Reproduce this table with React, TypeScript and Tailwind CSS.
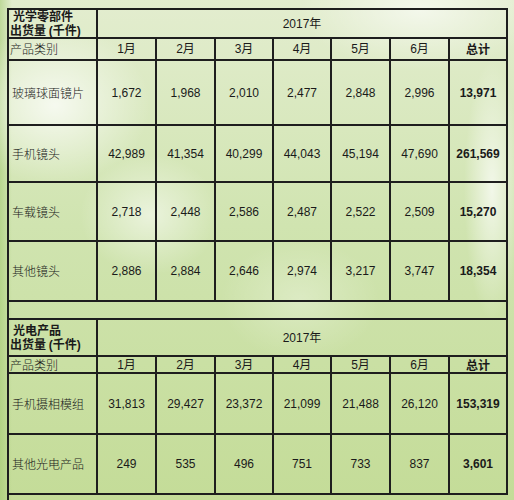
const cjk = "font-['Noto_Sans_CJK_SC',sans-serif]";
const num = "font-['Liberation_Sans','Noto_Sans_CJK_SC',sans-serif]";

const months = ["1月", "2月", "3月", "4月", "5月", "6月"];

type Row = { name: string; values: string[]; total: string; h: string };

const optics: Row[] = [
  { name: "玻璃球面镜片", values: ["1,672", "1,968", "2,010", "2,477", "2,848", "2,996"], total: "13,971", h: "h-[65px]" },
  { name: "手机镜头", values: ["42,989", "41,354", "40,299", "44,043", "45,194", "47,690"], total: "261,569", h: "h-[57px]" },
  { name: "车载镜头", values: ["2,718", "2,448", "2,586", "2,487", "2,522", "2,509"], total: "15,270", h: "h-[59px]" },
  { name: "其他镜头", values: ["2,886", "2,884", "2,646", "2,974", "3,217", "3,747"], total: "18,354", h: "h-[60px]" },
];

const photonics: Row[] = [
  { name: "手机摄相模组", values: ["31,813", "29,427", "23,372", "21,099", "21,488", "26,120"], total: "153,319", h: "h-[61px]" },
  { name: "其他光电产品", values: ["249", "535", "496", "751", "733", "837"], total: "3,601", h: "h-[60px]" },
];

const cell = "border-r-2 border-b-2 border-[#1e1e1e]";

function Section({
  title,
  rows,
  headH,
  subH,
}: {
  title: string;
  rows: Row[];
  headH: string;
  subH: string;
}) {
  return (
    <>
      <div className={`${cell} ${headH} ${cjk} flex flex-col justify-center pl-[1px] text-[12px] font-bold leading-[14px]`}>
        <span className="pl-[3px]">{title}</span>
        <span>
          出货量 <span className={num}>(</span>千件<span className={num}>)</span>
        </span>
      </div>
      <div className={`${cell} ${headH} col-span-7 flex items-center justify-center ${num} text-[12px]`}>
        2017年
      </div>

      <div className={`${cell} ${subH} ${cjk} flex items-center pl-[1px] text-[12px] font-light`}>
        产品类别
      </div>
      {months.map((m) => (
        <div key={m} className={`${cell} ${subH} flex items-center justify-center ${num} text-[12px]`}>
          {m}
        </div>
      ))}
      <div className={`${cell} ${subH} ${cjk} flex items-center justify-center text-[12px] font-bold`}>
        总计
      </div>

      {rows.map((r) => (
        <div key={r.name} className="contents">
          <div className={`${cell} ${r.h} ${cjk} flex items-center pl-[3px] text-[12px] font-light`}>
            {r.name}
          </div>
          {r.values.map((v, i) => (
            <div key={i} className={`${cell} ${r.h} flex items-center justify-center ${num} text-[12px]`}>
              {v}
            </div>
          ))}
          <div className={`${cell} ${r.h} flex items-center justify-center ${num} text-[12px] font-bold`}>
            {r.total}
          </div>
        </div>
      ))}
    </>
  );
}

export default function App() {
  return (
    <div className="relative h-[500px] w-[514px] overflow-hidden bg-[radial-gradient(ellipse_95px_80px_at_55px_105px,rgba(255,255,255,0.75),transparent),radial-gradient(ellipse_70px_60px_at_150px_215px,rgba(255,255,255,0.55),transparent),radial-gradient(ellipse_28px_130px_at_492px_190px,rgba(255,255,255,0.7),transparent),radial-gradient(ellipse_120px_60px_at_420px_10px,rgba(255,255,255,0.6),transparent),radial-gradient(ellipse_80px_60px_at_300px_300px,rgba(255,255,255,0.3),transparent),linear-gradient(to_right,rgba(160,200,110,0.55),transparent_12px),linear-gradient(to_bottom,#e3edcf,#d0e4b0_45%,#c4dc98)] pl-[7px] pt-[8px] text-[#1a1a1a]">
      <div className="grid w-[501px] grid-cols-[89px_59px_59px_58px_58px_59px_59px_58px] border-l-2 border-t-2 border-[#1e1e1e]">
        <Section title="光学零部件" rows={optics} headH="h-[29px]" subH="h-[22px]" />
        <div className={`${cell} col-span-8 h-[18px]`} />
        <Section title="光电产品" rows={photonics} headH="h-[37px]" subH="h-[17px]" />
      </div>
      <div className="h-[10px] w-[2px] bg-[#1e1e1e]" />
    </div>
  );
}
